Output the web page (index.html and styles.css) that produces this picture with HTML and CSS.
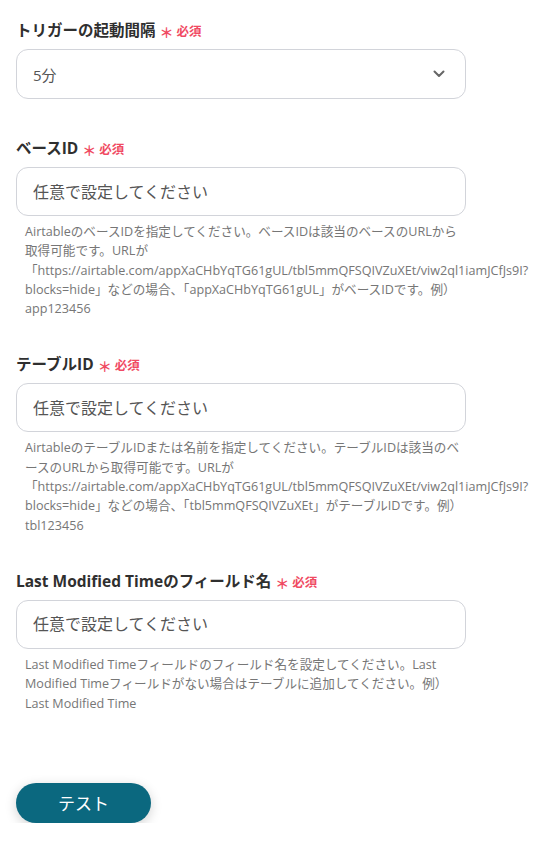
FILE: index.html
```html
<!DOCTYPE html>
<html lang="ja">
<head>
  <meta charset="UTF-8" />
  <meta name="viewport" content="width=device-width, initial-scale=1.0"/>
  <title>トリガー設定</title>
  <link rel="stylesheet" href="styles.css">
</head>
<body>

  <form class="settings-form">

    <div class="field field-select">
      <label class="field-label">トリガーの起動間隔<span class="req"><span class="star">＊</span>必須</span></label>
      <div class="select-box">
        <span>5分</span>
        <svg class="chevron" width="12" height="8" viewBox="0 0 12 8">
          <path d="M1.5 1.5 L6 6 L10.5 1.5" fill="none" stroke="#666" stroke-width="2" stroke-linecap="round" stroke-linejoin="round"/>
        </svg>
      </div>
    </div>

    <div class="field">
      <label class="field-label" for="baseId">ベースID<span class="req"><span class="star">＊</span>必須</span></label>
      <input type="text" id="baseId" class="text-input" placeholder="任意で設定してください" />
      <p class="help">AirtableのベースIDを指定してください。ベースIDは該当のベースのURLから取得可能です。URLが「https://airtable.com/appXaCHbYqTG61gUL/tbl5mmQFSQIVZuXEt/viw2ql1iamJCfJs9I?blocks=hide」などの場合、「appXaCHbYqTG61gUL」がベースIDです。例）app123456</p>
    </div>

    <div class="field">
      <label class="field-label" for="tableId">テーブルID<span class="req"><span class="star">＊</span>必須</span></label>
      <input type="text" id="tableId" class="text-input" placeholder="任意で設定してください" />
      <p class="help">AirtableのテーブルIDまたは名前を指定してください。テーブルIDは該当のベースのURLから取得可能です。URLが「https://airtable.com/appXaCHbYqTG61gUL/tbl5mmQFSQIVZuXEt/viw2ql1iamJCfJs9I?blocks=hide」などの場合、「tbl5mmQFSQIVZuXEt」がテーブルIDです。例）tbl123456</p>
    </div>

    <div class="field">
      <label class="field-label" for="lastMod">Last Modified Timeのフィールド名<span class="req"><span class="star">＊</span>必須</span></label>
      <input type="text" id="lastMod" class="text-input" placeholder="任意で設定してください" />
      <p class="help">Last Modified Timeフィールドのフィールド名を設定してください。Last Modified Timeフィールドがない場合はテーブルに追加してください。例）Last Modified Time</p>
    </div>

    <button type="button" class="test-btn">テスト</button>
  </form>

</body>
</html>
```

FILE: styles.css
```css
/* Base */
* {
  margin: 0;
  padding: 0;
  box-sizing: border-box;
  font-family: 'Open Sans', 'Noto Sans CJK JP', sans-serif;
}

body {
  background: #fff;
  color: #333;
}

.settings-form {
  padding: 19px 16px 0 16px;
}

.field {
  max-width: 450px;
  margin-bottom: 35px;
}

.field-select {
  margin-bottom: 38px;
}

.field-label {
  display: flex;
  align-items: baseline;
  height: 22px;
  line-height: 22px;
  font-size: 15.5px;
  font-weight: 700;
  color: #2f2f2f;
  margin-bottom: 8px;
  white-space: nowrap;
}

.req {
  margin-left: 4px;
  font-size: 12.5px;
  font-weight: 700;
  color: #f04a62;
}

.req .star {
  font-family: 'Noto Sans CJK JP', sans-serif;
  font-weight: 700;
  font-size: 14px;
  margin-right: 3px;
  position: relative;
  top: 2px;
}

.select-box {
  display: flex;
  align-items: center;
  justify-content: space-between;
  height: 50px;
  padding: 0 20px 0 16px;
  border: 1px solid #d2d4da;
  border-radius: 12px;
  font-size: 15px;
  color: #555;
}

.text-input {
  display: block;
  width: 100%;
  height: 49px;
  padding: 0 16px;
  border: 1px solid #d2d4da;
  border-radius: 12px;
  font-size: 16px;
  color: #333;
  outline: none;
}

.text-input::placeholder {
  color: #555;
}

.help {
  width: 450px;
  margin-top: 6px;
  padding-left: 9px;
  font-size: 12.6px;
  line-height: 19.3px;
  color: #767676;
}

.test-btn {
  margin-top: 35px;
  width: 135px;
  height: 40px;
  border: none;
  border-radius: 20px;
  background: #0b687f;
  color: #fff;
  font-size: 17px;
  box-shadow: 0 3px 12px rgba(0, 0, 0, 0.18);
  cursor: pointer;
}
```
